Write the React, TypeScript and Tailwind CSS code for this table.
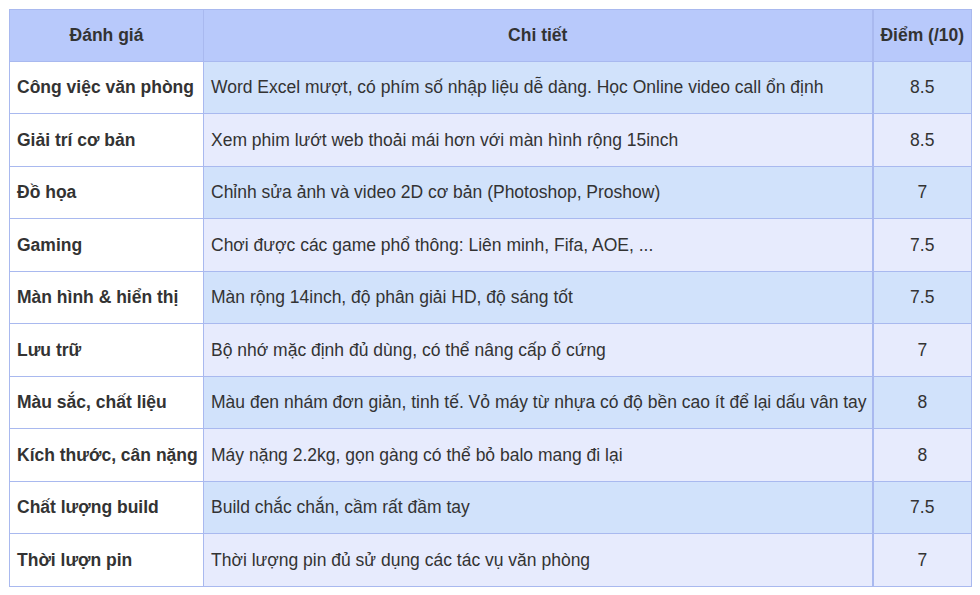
import React from "react";

const rows: [string, string, string][] = [
  ["Công việc văn phòng", "Word Excel mượt, có phím số nhập liệu dễ dàng. Học Online video call ổn định", "8.5"],
  ["Giải trí cơ bản", "Xem phim lướt web thoải mái hơn với màn hình rộng 15inch", "8.5"],
  ["Đồ họa", "Chỉnh sửa ảnh và video 2D cơ bản (Photoshop, Proshow)", "7"],
  ["Gaming", "Chơi được các game phổ thông: Liên minh, Fifa, AOE, ...", "7.5"],
  ["Màn hình & hiển thị", "Màn rộng 14inch, độ phân giải HD, độ sáng tốt", "7.5"],
  ["Lưu trữ", "Bộ nhớ mặc định đủ dùng, có thể nâng cấp ổ cứng", "7"],
  ["Màu sắc, chất liệu", "Màu đen nhám đơn giản, tinh tế. Vỏ máy từ nhựa có độ bền cao ít để lại dấu vân tay", "8"],
  ["Kích thước, cân nặng", "Máy nặng 2.2kg, gọn gàng có thể bỏ balo mang đi lại", "8"],
  ["Chất lượng build", "Build chắc chắn, cầm rất đầm tay", "7.5"],
  ["Thời lượn pin", "Thời lượng pin đủ sử dụng các tác vụ văn phòng", "7"],
];

export default function App() {
  return (
    <div className="w-[980px] h-[595px] bg-white pt-[9px] pl-[9px] font-['Liberation_Sans',Arial,sans-serif]">
      <table className="w-[962px] table-fixed border-collapse text-[17.5px] text-[#333]">
        <colgroup>
          <col className="w-[194px]" />
          <col className="w-[669px]" />
          <col className="w-[99px]" />
        </colgroup>
        <thead>
          <tr className="bg-[#b8c9fb]">
            <th className="h-[52px] border border-[#a9b9ef] font-bold text-center p-0">Đánh giá</th>
            <th className="h-[52px] border border-[#a9b9ef] border-r-2 font-bold text-center p-0">Chi tiết</th>
            <th className="h-[52px] border border-[#a9b9ef] font-bold text-center p-0 whitespace-nowrap">Điểm (/10)</th>
          </tr>
        </thead>
        <tbody>
          {rows.map((r, i) => {
            const even = i % 2 === 0;
            return (
              <tr key={i} className={even ? "h-[52px]" : "h-[53px]"}>
                <td className="border border-[#a9b9ef] bg-white font-bold pl-[7px] p-0 whitespace-nowrap">{r[0]}</td>
                <td className={even ? "border border-[#a9b9ef] border-r-2 bg-[#d1e2fb] pl-[7px] p-0 whitespace-nowrap" : "border border-[#a9b9ef] border-r-2 bg-[#e7ebfd] pl-[7px] p-0 whitespace-nowrap"}>{r[1]}</td>
                <td className={even ? "border border-[#a9b9ef] bg-[#d1e2fb] text-center p-0" : "border border-[#a9b9ef] bg-[#e7ebfd] text-center p-0"}>{r[2]}</td>
              </tr>
            );
          })}
        </tbody>
      </table>
    </div>
  );
}
